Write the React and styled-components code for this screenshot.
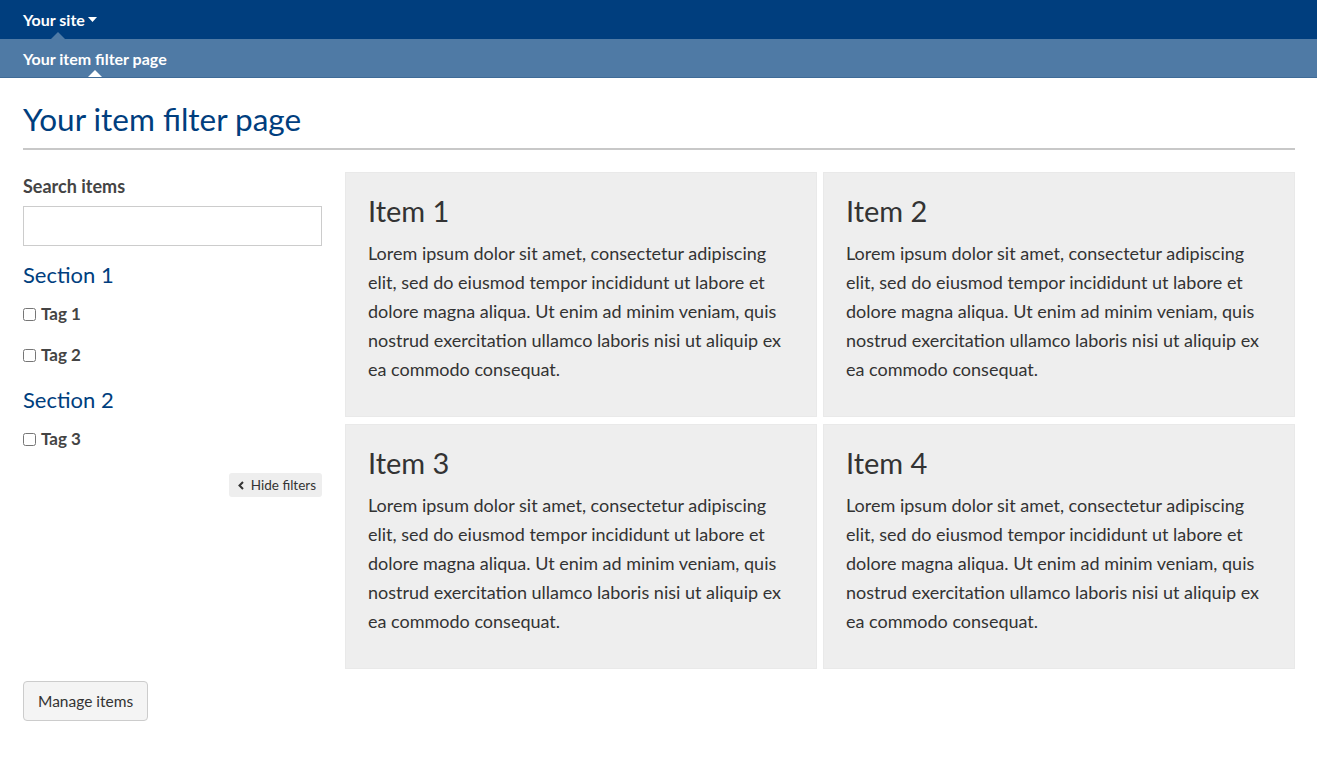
import React from "react";
import styled, { createGlobalStyle } from "styled-components";

const Global = createGlobalStyle`
  * { box-sizing: border-box; }
  body { margin: 0; font-family: Lato, "Open Sans", sans-serif; color: #333; background: #fff; }
`;

const TopBar = styled.div`
  height: 39px;
  background: #003e7e;
  display: flex;
  align-items: center;
  padding: 0 23px;
`;

const NavItem = styled.div`
  position: relative;
  height: 100%;
  display: flex;
  align-items: center;
  color: #fff;
  font-weight: 700;
  font-size: 16px;
  gap: 3px;
`;

const Notch = styled.span`
  position: absolute;
  left: ${(p) => p.$left}px;
  bottom: 0;
  width: 0;
  height: 0;
  border-left: 7px solid transparent;
  border-right: 7px solid transparent;
  border-bottom: 7px solid ${(p) => p.$color};
`;

const SubBar = styled.div`
  height: 39px;
  background: #4f7aa5;
  border-bottom: 1px solid #3f6b97;
  display: flex;
  align-items: center;
  padding: 0 23px;
`;

const Page = styled.main`
  padding: 0 22px 0 23px;
`;

const Title = styled.h1`
  margin: 0;
  padding: 22px 0 10px;
  font-size: 31.5px;
  font-weight: 400;
  color: #003e7e;
  line-height: 38px;
  border-bottom: 2px solid #c8c8c8;
`;

const Layout = styled.div`
  display: flex;
  gap: 23px;
  margin-top: 22px;
`;

const Sidebar = styled.aside`
  width: 299px;
  flex: none;
  display: flex;
  flex-direction: column;
`;

const Label = styled.label`
  font-weight: 700;
  font-size: 18px;
  color: #444;
  line-height: 28px;
  margin: 0 0 6px;
`;

const SearchInput = styled.input`
  height: 40px;
  width: 100%;
  border: 1px solid #ccc;
  font: inherit;
  padding: 0 10px;
`;

const SectionTitle = styled.h3`
  margin: ${(p) => p.$top}px 0 11px;
  font-size: 22px;
  font-weight: 400;
  color: #003e7e;
  line-height: 28px;
`;

const TagRow = styled.label`
  display: flex;
  align-items: center;
  font-size: 17px;
  font-weight: 700;
  color: #444;
  line-height: 28px;
  margin-bottom: 13px;
  input {
    margin: 0 5px 0 0;
    width: 13px;
    height: 13px;
  }
`;

const HideRow = styled.div`
  display: flex;
  justify-content: flex-end;
  margin-top: 7px;
`;

const HideButton = styled.button`
  display: flex;
  align-items: center;
  gap: 7px;
  height: 24px;
  padding: 0 6px 0 9px;
  border: none;
  border-radius: 3px;
  background: #eee;
  font-family: Lato, sans-serif;
  font-size: 13.5px;
  color: #333;
`;

const Grid = styled.div`
  flex: 1;
  display: grid;
  grid-template-columns: 1fr 1fr;
  grid-auto-rows: 245px;
  gap: 7px 6px;
`;

const Card = styled.article`
  background: #eee;
  border: 1px solid #e9e9e9;
  padding: 19px 22px;
`;

const CardTitle = styled.h2`
  margin: 0 0 9px;
  font-size: 29px;
  font-weight: 400;
  line-height: 38px;
  color: #333;
`;

const CardText = styled.p`
  margin: 0;
  font-size: 18px;
  line-height: 29px;
  color: #333;
`;

const ManageButton = styled.button`
  margin: 12px 0 40px;
  height: 40px;
  padding: 0 14px;
  border: 1px solid #ccc;
  border-radius: 4px;
  background: #f4f4f4;
  font-family: Lato, sans-serif;
  font-size: 15.5px;
  color: #333;
`;

const lorem =
  "Lorem ipsum dolor sit amet, consectetur adipiscing elit, sed do eiusmod tempor incididunt ut labore et dolore magna aliqua. Ut enim ad minim veniam, quis nostrud exercitation ullamco laboris nisi ut aliquip ex ea commodo consequat.";

const items = ["Item 1", "Item 2", "Item 3", "Item 4"];

export default function App() {
  return (
    <>
      <Global />
      <TopBar>
        <NavItem>
          Your site
          <svg width="9" height="5" viewBox="0 0 9 5">
            <path d="M0 0h9L4.5 5z" fill="#fff" />
          </svg>
          <Notch $left={28} $color="#4f7aa5" />
        </NavItem>
      </TopBar>
      <SubBar>
        <NavItem>
          Your item filter page
          <Notch $left={65} $color="#fff" />
        </NavItem>
      </SubBar>
      <Page>
        <Title>Your item filter page</Title>
        <Layout>
          <Sidebar>
            <Label htmlFor="search">Search items</Label>
            <SearchInput id="search" type="text" />
            <SectionTitle $top={15}>Section 1</SectionTitle>
            <TagRow>
              <input type="checkbox" />
              Tag 1
            </TagRow>
            <TagRow>
              <input type="checkbox" />
              Tag 2
            </TagRow>
            <SectionTitle $top={4}>Section 2</SectionTitle>
            <TagRow>
              <input type="checkbox" />
              Tag 3
            </TagRow>
            <HideRow>
              <HideButton>
                <svg width="6" height="9" viewBox="0 0 6 9">
                  <path d="M5 1L1.5 4.5 5 8" stroke="#333" strokeWidth="2" fill="none" />
                </svg>
                Hide filters
              </HideButton>
            </HideRow>
          </Sidebar>
          <Grid>
            {items.map((t) => (
              <Card key={t}>
                <CardTitle>{t}</CardTitle>
                <CardText>{lorem}</CardText>
              </Card>
            ))}
          </Grid>
        </Layout>
        <ManageButton>Manage items</ManageButton>
      </Page>
    </>
  );
}
